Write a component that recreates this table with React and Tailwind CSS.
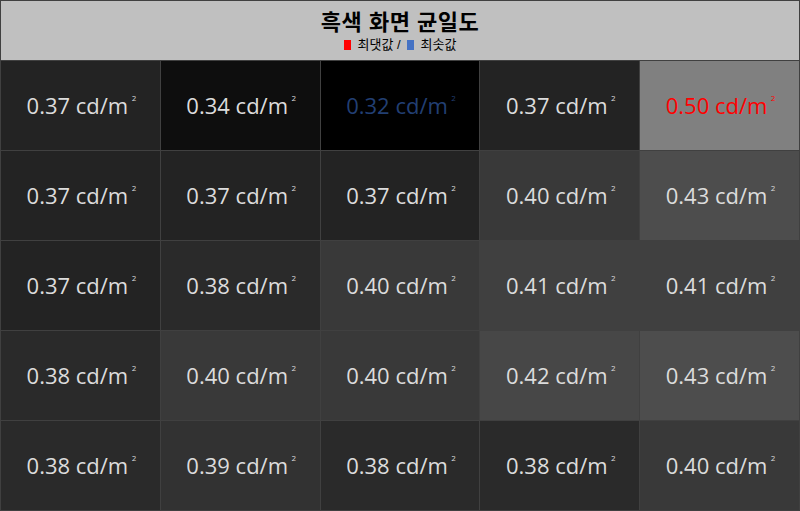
const rows = [
  [["0.37", "bg-[#232323]"], ["0.34", "bg-[#0e0e0e]"], ["0.32", "bg-[#000000]", "min"], ["0.37", "bg-[#232323]"], ["0.50", "bg-[#808080]", "max"]],
  [["0.37", "bg-[#232323]"], ["0.37", "bg-[#232323]"], ["0.37", "bg-[#232323]"], ["0.40", "bg-[#393939]"], ["0.43", "bg-[#4d4d4d]"]],
  [["0.37", "bg-[#232323]"], ["0.38", "bg-[#2a2a2a]"], ["0.40", "bg-[#393939]"], ["0.41", "bg-[#404040]"], ["0.41", "bg-[#404040]"]],
  [["0.38", "bg-[#2a2a2a]"], ["0.40", "bg-[#393939]"], ["0.40", "bg-[#393939]"], ["0.42", "bg-[#474747]"], ["0.43", "bg-[#4d4d4d]"]],
  [["0.38", "bg-[#2a2a2a]"], ["0.39", "bg-[#323232]"], ["0.38", "bg-[#2a2a2a]"], ["0.38", "bg-[#2a2a2a]"], ["0.40", "bg-[#393939]"]],
];

const cjk = { fontFamily: '"Liberation Sans", "Noto Sans CJK KR", sans-serif' };

export default function App() {
  return (
    <div
      className="w-[800px] h-[511px] bg-[#404040] p-px flex flex-col gap-px"
      style={{ fontFamily: '"Open Sans", "Noto Sans", "Noto Sans CJK KR", sans-serif' }}
    >
      <div className="h-[59px] bg-[#c0c0c0] flex flex-col items-center pt-[10px]">
        <div className="text-[22px] font-bold text-black leading-[24px] tracking-[0.5px]" style={cjk}>
          흑색 화면 균일도
        </div>
        <div className="flex items-center text-[13px] text-black leading-[14px] mt-[3px]" style={cjk}>
          <span className="inline-block w-[7px] h-[10px] bg-[#ff0000] mr-[7px]"></span>
          <span>최댓값 /</span>
          <span className="inline-block w-[7px] h-[10px] bg-[#4472c4] ml-[6px] mr-[7px]"></span>
          <span>최솟값</span>
        </div>
      </div>
      <div className="flex-1 grid grid-cols-5 grid-rows-5 gap-px">
        {rows.flat().map(([v, bg, kind], i) => (
          <div
            key={i}
            className={`${bg} flex items-center justify-center text-[22px] pr-[6px] pb-[2px] ${
              kind === "max" ? "text-[#ff0000]" : kind === "min" ? "text-[#223f73]" : "text-[#dcdcdc]"
            }`}
          >
            <span className="relative leading-none">
              {v} cd/m
              <span className="absolute -right-[8px] top-[0px] text-[8px] leading-none">2</span>
            </span>
          </div>
        ))}
      </div>
    </div>
  );
}
